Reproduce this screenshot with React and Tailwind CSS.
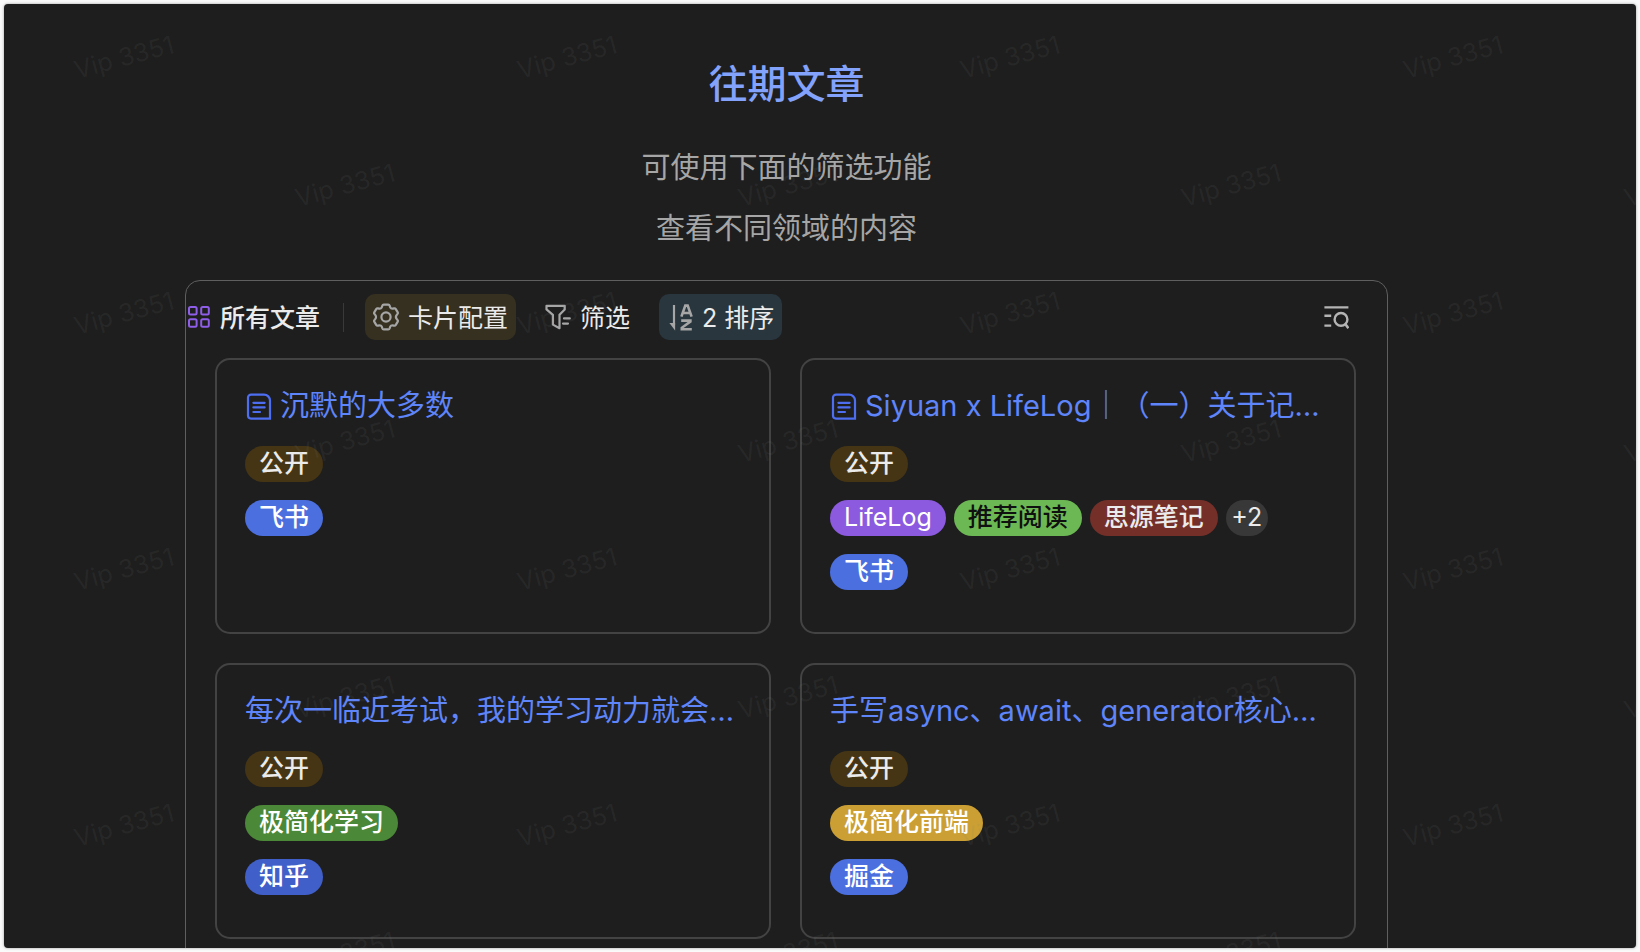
const TAG_STYLES = {
  brown: 'bg-[#453514] text-[#ebebeb] font-medium',
  blue: 'bg-[#4c6fe0] text-white font-medium',
  darkBlue: 'bg-[#405fc8] text-white font-medium',
  purple: 'bg-[#8b5adf] text-white font-normal',
  lime: 'bg-[#6cb854] text-[#101010] font-medium',
  green: 'bg-[#4b8837] text-white font-medium',
  red: 'bg-[#752f29] text-[#ebebeb] font-medium',
  gold: 'bg-[#cb9f33] text-white font-medium',
};

const ARTICLES = [
  {
    title: '沉默的大多数',
    isDoc: true,
    rows: [
      [{ label: '公开', color: 'brown' }],
      [{ label: '飞书', color: 'blue' }],
    ],
  },
  {
    title: 'Siyuan x LifeLog｜（一）关于记…',
    isDoc: true,
    rows: [
      [{ label: '公开', color: 'brown' }],
      [
        { label: 'LifeLog', color: 'purple' },
        { label: '推荐阅读', color: 'lime' },
        { label: '思源笔记', color: 'red' },
      ],
      [{ label: '飞书', color: 'blue' }],
    ],
    more: 2,
  },
  {
    title: '每次一临近考试，我的学习动力就会…',
    rows: [
      [{ label: '公开', color: 'brown' }],
      [{ label: '极简化学习', color: 'green' }],
      [{ label: '知乎', color: 'darkBlue' }],
    ],
  },
  {
    title: '手写async、await、generator核心…',
    rows: [
      [{ label: '公开', color: 'brown' }],
      [{ label: '极简化前端', color: 'gold' }],
      [{ label: '掘金', color: 'blue' }],
    ],
  },
];

// Staggered watermark positions, every other row is shifted by half a step
const WATERMARKS = [];
for (let row = 0; row < 8; row++) {
  for (let col = 0; col < 4; col++) {
    WATERMARKS.push({
      left: 69 + col * 443 + (row % 2) * 221,
      top: 38 + row * 128,
    });
  }
}

function GridIcon() {
  return (
    <svg className="size-[22px] shrink-0" viewBox="0 0 22 22" fill="none" stroke="#8f5ee8" strokeWidth="2">
      <rect x="1" y="1" width="7.6" height="7.6" rx="1.5" />
      <rect x="13.2" y="1" width="7.6" height="7.6" rx="1.5" />
      <rect x="1" y="13.2" width="7.6" height="7.6" rx="1.5" />
      <rect x="13.2" y="13.2" width="7.6" height="7.6" rx="1.5" />
    </svg>
  );
}

function GearIcon() {
  return (
    <svg className="h-[28px] w-[26px] shrink-0" viewBox="0 0 26 28" fill="none" stroke="#a6a6a6" strokeWidth="2.2" strokeLinejoin="round">
      <path d="M10.8 1.6h4.4q1.2 0 1.5 1.2c.5 2.6 1.8 3.4 4.2 2.6q1.2-.4 1.9.7l1.8 3q.7 1.2-.3 2.1c-1.8 1.8-1.8 3.8 0 5.6q1 .9.3 2.1l-1.8 3q-.7 1.1-1.9.7c-2.4-.8-3.7 0-4.2 2.6q-.3 1.2-1.5 1.2h-4.4q-1.2 0-1.5-1.2c-.5-2.6-1.8-3.4-4.2-2.6q-1.2.4-1.9-.7l-1.8-3q-.7-1.2.3-2.1c1.8-1.8 1.8-3.8 0-5.6q-1-.9-.3-2.1l1.8-3q.7-1.1 1.9-.7c2.4.8 3.7 0 4.2-2.6q.3-1.2 1.5-1.2z" />
      <circle cx="13" cy="14" r="4.6" />
    </svg>
  );
}

function FilterIcon() {
  return (
    <svg className="size-[26px] shrink-0" viewBox="0 0 26 26" fill="none" stroke="#a6a6a6" strokeWidth="2.2" strokeLinejoin="round" strokeLinecap="round">
      <path d="M1.5 1.8h18.2v3.6l-5.2 5.4v13.4l-6.6-3.6v-9.8L1.5 5.4z" />
      <path d="M19 14.4h5.8M18 19.6h5" />
    </svg>
  );
}

function SortIcon() {
  return (
    <svg className="h-[28px] w-[24px] shrink-0" viewBox="0 0 24 28" fill="none" stroke="#a6a6a6" strokeWidth="2.6">
      <path d="M5 2v20" strokeWidth="2.2" />
      <path d="M.4 20h5.7v7.4z" fill="#a6a6a6" stroke="none" />
      <path d="M12.4 13.6l3.9-11h2.4l3.9 11M13.6 10h7.8" />
      <path d="M12.2 17.6h9.2v1l-8.6 6.2v1.4h10" />
    </svg>
  );
}

function SearchIcon() {
  return (
    <svg className="size-[25px]" viewBox="0 0 25 25" fill="none" stroke="#b4b4b4" strokeWidth="2.4">
      <path d="M.4 2.4h24M.4 10.8h6.8M.4 20.6h6.8" />
      <circle cx="17" cy="14.4" r="6.4" />
      <path d="M21.2 19l3.2 4.2" strokeWidth="2.6" />
    </svg>
  );
}

function DocIcon() {
  return (
    <svg className="h-[28px] w-[27px] shrink-0" viewBox="0 0 27 28" fill="none" stroke="#4e6ef2" strokeWidth="2.2">
      <path d="M3 5.6a3 3 0 0 1 3-3h13a6 6 0 0 1 6 6v18H6a3 3 0 0 1-3-3z" />
      <path d="M8.4 10.8h11.2M8.4 15.4h11.2M8.4 20h6.6" strokeLinecap="round" />
    </svg>
  );
}

function Tag({ label, color }) {
  return (
    <span className={`h-9 rounded-full px-[14px] text-[25px] leading-[35px] whitespace-nowrap ${TAG_STYLES[color]}`}>
      {label}
    </span>
  );
}

function ArticleCard({ article }) {
  return (
    <article className="flex h-[276px] min-w-0 flex-col rounded-[15px] border-2 border-[#434343] px-7 py-[27px]">
      <h2 className="mb-[23px] h-9 min-w-0 text-[29px] leading-[37px] text-[#5f85fa]">
        <a href="#" className="flex items-center gap-2">
          {article.isDoc && <DocIcon />}
          <span className="truncate">{article.title}</span>
        </a>
      </h2>
      <div className="flex flex-col gap-[18px]">
        {article.rows.map((tags, i) => (
          <div key={i} className="flex gap-2">
            {tags.map((tag) => (
              <Tag key={tag.label} label={tag.label} color={tag.color} />
            ))}
            {article.more && tags.length > 1 && (
              <span className="h-9 w-[42px] rounded-full bg-[#383838] text-center text-[25px] leading-[35px] text-[#ebebeb]">
                +{article.more}
              </span>
            )}
          </div>
        ))}
      </div>
    </article>
  );
}

function Toolbar() {
  return (
    <div className="flex h-[46px] items-center pl-[2px] text-[25px] leading-[36px] text-[#ebebeb]">
      <GridIcon />
      <span className="ml-[10px] pt-px font-medium">所有文章</span>
      <div className="mr-[21px] ml-[23px] h-[29px] w-px bg-[#393939]" />
      <button className="flex h-[46px] items-center gap-[9px] rounded-[10px] bg-[#363021] px-2">
        <GearIcon />
        <span className="pt-px">卡片配置</span>
      </button>
      <button className="ml-[21px] flex h-[46px] items-center gap-[9px] px-2">
        <FilterIcon />
        <span className="pt-px">筛选</span>
      </button>
      <button className="ml-[21px] flex h-[46px] items-center gap-[9px] rounded-[10px] bg-[#29363e] pr-2 pl-[10px]">
        <SortIcon />
        <span className="pt-px">2 排序</span>
      </button>
      <button aria-label="搜索" className="mr-[38px] ml-auto">
        <SearchIcon />
      </button>
    </div>
  );
}

function App() {
  return (
    <div className="h-screen overflow-hidden bg-[#fafafa] p-1 font-['Inter','Noto_Sans_CJK_SC',sans-serif]">
      <div className="relative h-full overflow-hidden rounded-[4px] bg-[#1e1e1e] pr-[248px] pl-[181px] shadow-[0_0_3px_#00000060]">
        <header className="pt-[51px] text-center">
          <h1 className="text-[39px] leading-[58px] font-medium text-[#82a2fc]">往期文章</h1>
          <div className="mt-6 text-[29px] leading-[61px] text-[#a6a6a6]">
            <p>可使用下面的筛选功能</p>
            <p>查看不同领域的内容</p>
          </div>
        </header>
        <main className="mt-[21px] rounded-t-[15px] border border-[#5f5f5f] pt-[13px] pb-7">
          <Toolbar />
          <div className="mt-[18px] grid grid-cols-2 gap-[29px] pr-[31px] pl-[29px]">
            {ARTICLES.map((article) => (
              <ArticleCard key={article.title} article={article} />
            ))}
          </div>
        </main>

        <div aria-hidden="true" className="pointer-events-none absolute inset-0 overflow-hidden">
          {WATERMARKS.map((pos) => (
            <span
              key={`${pos.left}-${pos.top}`}
              className="absolute -rotate-15 text-[25px] leading-[30px] whitespace-nowrap text-[#8080801a]"
              style={pos}
            >
              Vip 3351
            </span>
          ))}
        </div>
      </div>
    </div>
  );
}

export default App;
